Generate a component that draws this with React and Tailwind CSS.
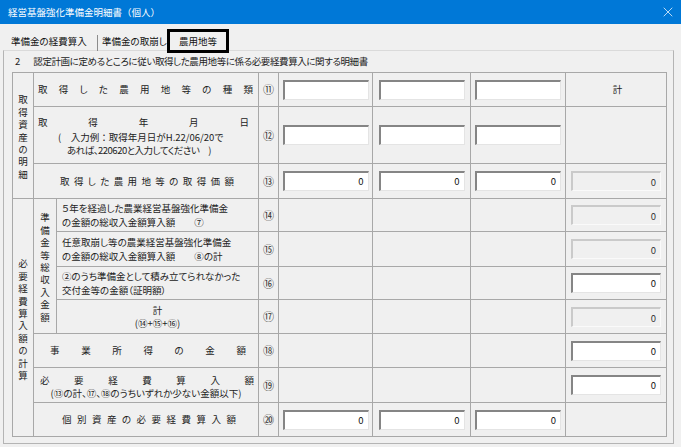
import React from 'react';
import { X } from 'lucide-react';

const cell = 'border-r border-b border-[#a8a8a8]';

const Spread = ({ text, className = '' }) => (
  <div className={`flex justify-between ${className}`}>
    {[...text].map((c, i) => (
      <span key={i}>{c}</span>
    ))}
  </div>
);

// stacked label, one text run in vertical writing
const Vert = ({ text }) => (
  <span className="[writing-mode:vertical-rl] tracking-[2.9px] leading-[12px]">{text}</span>
);

// sunken edit box, white or read-only grey
const Box = ({ value = '', grey = false, wide = false }) => (
  <div
    className={`${wide ? 'w-[90px]' : 'w-[86px]'} h-[20px] flex justify-end pr-[4px] text-[9.5px] leading-[12px] border-t-2 border-l-2 border-b border-r ${
      grey
        ? 'bg-[#f0f0f0] border-t-[#cacaca] border-l-[#cacaca] border-b-[#fafafa] border-r-[#fafafa] items-end pb-[2px] text-[#333]'
        : 'bg-white border-t-[#858585] border-l-[#858585] border-b-[#e4e4e4] border-r-[#e4e4e4] items-start pt-[2px] text-[#111]'
    }`}
  >
    {value}
  </div>
);

const Num = ({ n }) => (
  <div className={`${cell} flex items-center justify-center text-[11px] text-[#333]`}>{n}</div>
);

const Slot = ({ children }) => (
  <div className={`${cell} flex items-center justify-center`}>{children}</div>
);

// the three per-asset columns
const Three = ({ value }) => (
  <>
    <Slot>{value !== undefined && <Box value={value} />}</Slot>
    <Slot>{value !== undefined && <Box value={value} />}</Slot>
    <Slot>{value !== undefined && <Box value={value} />}</Slot>
  </>
);

const Empty3 = () => (
  <>
    <Slot />
    <Slot />
    <Slot />
  </>
);

const TwoLines = ({ a, b }) => (
  <div className={`${cell} flex flex-col justify-center pl-[5px] leading-[14px]`}>
    <span>{a}</span>
    <span>{b}</span>
  </div>
);

export default function App() {
  return (
    <div className="w-[681px] h-[447px] overflow-hidden bg-[#f0f0f0] text-[#222] text-[9.5px] font-['Noto_Sans_CJK_JP','Noto_Sans',sans-serif] [font-feature-settings:'palt']">
      {/* Title bar */}
      <div className="h-[24px] bg-[#0078d7] flex items-center justify-between pl-[8px] pr-[5px] text-white">
        <span className="[font-feature-settings:normal]">経営基盤強化準備金明細書（個人）</span>
        <X size={16} strokeWidth={1.1} />
      </div>

      {/* Tabs */}
      <div className="relative z-10 flex items-center h-[24px] mt-[5px] text-[#111]">
        <span className="ml-[11px] w-[86px]">準備金の経費算入</span>
        <span className="w-px h-[16px] bg-[#8c8c8c] self-end mb-[2px]" />
        <span className="ml-[4px] w-[65px] whitespace-nowrap">準備金の取崩し</span>
        <div className="w-[62px] h-[24px] border-[3px] border-black bg-[#f0f0f0] flex items-center justify-center">
          農用地等
        </div>
      </div>

      {/* Tab panel */}
      <div className="-mt-[3px] ml-[3px] w-[671px] border border-[#b4b4b4] border-t-[#dadada] pl-[8px] pb-[6px]">
        <div className="h-[21px] flex items-center pl-[3px]">
          <span>2</span>
          <span className="ml-[13px] tracking-[-0.4px]">認定計画に定めるところに従い取得した農用地等に係る必要経費算入に関する明細書</span>
        </div>

        <div className="w-[655px] grid grid-cols-[21px_23px_202px_20px_94px_98px_95px_101px] grid-rows-[34px_57px_35px_33px_35px_33px_34px_34px_35px_34px] border-t border-l border-[#a8a8a8]">
          {/* 取得資産の明細 */}
          <div className={`${cell} row-span-3 flex items-center justify-center pt-[6px]`}>
            <Vert text="取得資産の明細" />
          </div>

          {/* ⑪ */}
          <div className={`${cell} col-span-2 flex items-center`}>
            <Spread text="取得した農用地等の種類" className="w-full pl-[4px] pr-[5px]" />
          </div>
          <Num n="⑪" />
          <Three value="" />
          <div className={`${cell} flex items-center justify-center pl-[3px]`}>計</div>

          {/* ⑫ */}
          <div className={`${cell} col-span-2 flex flex-col pt-[9px] leading-[13px]`}>
            <Spread text="取得年月日" className="pl-[4px] pr-[9px]" />
            <span className="mt-[2px] pl-[24px] [font-feature-settings:normal]">(　入力例：取得年月日がH.22/06/20で</span>
            <span className="pl-[33px] tracking-[-0.5px]">あれば、220620と入力してください　)</span>
          </div>
          <Num n="⑫" />
          <Three value="" />
          <Slot />

          {/* ⑬ */}
          <div className={`${cell} col-span-2 flex items-center`}>
            <Spread text="取得した農用地等の取得価額" className="w-full pl-[26px] pr-[24px]" />
          </div>
          <Num n="⑬" />
          <Three value="0" />
          <Slot>
            <Box value="0" grey wide />
          </Slot>

          {/* 必要経費算入額の計算 */}
          <div className={`${cell} row-span-7 flex items-center justify-center pt-[6px]`}>
            <Vert text="必要経費算入額の計算" />
          </div>
          <div className={`${cell} row-span-4 flex items-center justify-center pt-[6px]`}>
            <Vert text="準備金等総収入金額" />
          </div>

          {/* ⑭ */}
          <TwoLines a="５年を経過した農業経営基盤強化準備金" b="の金額の総収入金額算入額　　⑦" />
          <Num n="⑭" />
          <Empty3 />
          <Slot>
            <Box value="0" grey wide />
          </Slot>

          {/* ⑮ */}
          <TwoLines a="任意取崩し等の農業経営基盤強化準備金" b="の金額の総収入金額算入額　　⑧の計" />
          <Num n="⑮" />
          <Empty3 />
          <Slot>
            <Box value="0" grey wide />
          </Slot>

          {/* ⑯ */}
          <TwoLines a="②のうち準備金として積み立てられなかった" b="交付金等の金額（証明額）" />
          <Num n="⑯" />
          <Empty3 />
          <Slot>
            <Box value="0" wide />
          </Slot>

          {/* ⑰ */}
          <div className={`${cell} flex flex-col items-center justify-center leading-[13px]`}>
            <span>計</span>
            <span>(⑭+⑮+⑯)</span>
          </div>
          <Num n="⑰" />
          <Empty3 />
          <Slot>
            <Box value="0" grey wide />
          </Slot>

          {/* ⑱ */}
          <div className={`${cell} col-span-2 flex items-center`}>
            <Spread text="事業所得の金額" className="w-full pl-[16px] pr-[12px]" />
          </div>
          <Num n="⑱" />
          <Empty3 />
          <Slot>
            <Box value="0" wide />
          </Slot>

          {/* ⑲ */}
          <div className={`${cell} col-span-2 flex flex-col justify-center pt-[3px] leading-[13px]`}>
            <Spread text="必要経費算入額" className="pl-[6px] pr-[4px]" />
            <span className="text-center">(⑬の計、⑰、⑱のうちいずれか少ない金額以下)</span>
          </div>
          <Num n="⑲" />
          <Empty3 />
          <Slot>
            <Box value="0" wide />
          </Slot>

          {/* ⑳ */}
          <div className={`${cell} col-span-2 flex items-center`}>
            <Spread text="個別資産の必要経費算入額" className="w-full pl-[28px] pr-[22px]" />
          </div>
          <Num n="⑳" />
          <Three value="0" />
          <Slot />
        </div>
      </div>
    </div>
  );
}
